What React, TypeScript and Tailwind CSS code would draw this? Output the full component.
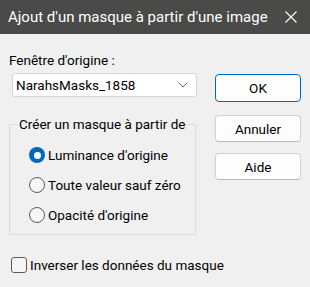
import React from "react";

function Radio({ checked, label }: { checked?: boolean; label: string }) {
  return (
    <div className="flex h-[30px] items-center">
      {checked ? (
        <span className="flex h-[16px] w-[16px] shrink-0 items-center justify-center rounded-full bg-[#0067c0]">
          <span className="h-[7px] w-[7px] rounded-full bg-white" />
        </span>
      ) : (
        <span className="h-[16px] w-[16px] shrink-0 rounded-full border border-[#5c5c5c] bg-[#f6f6f6]" />
      )}
      <span className="ml-[3px]">{label}</span>
    </div>
  );
}

function Button({ label, primary }: { label: string; primary?: boolean }) {
  return (
    <div
      className={
        "flex w-[86px] items-center justify-center rounded-[4px] border bg-[#fdfdfd] " +
        (primary ? "h-[28px] border-[#0067c0]" : "h-[27px] border-[#d0d0d0] border-b-[#b8b8b8]")
      }
    >
      {label}
    </div>
  );
}

export default function App() {
  return (
    <div className="h-[287px] w-[310px] overflow-hidden whitespace-nowrap bg-[#f0f0f0] font-['Roboto',sans-serif] text-[13.5px] leading-[20px] text-black">
      <div className="flex h-[34px] items-center justify-between bg-[#4a4a48] pl-[8px] pr-[13px] text-[15px] text-white">
        <span>Ajout d'un masque à partir d'une image</span>
        <svg width="12" height="12" viewBox="0 0 12 12" stroke="white" strokeWidth="1.1">
          <path d="M0.5 0.5 L11.5 11.5 M11.5 0.5 L0.5 11.5" />
        </svg>
      </div>

      <div className="flex">
        <div className="ml-[9px] w-[187px]">
          <div className="mt-[16px] h-[20px]">Fenêtre d'origine :</div>
          <div className="ml-[3px] mt-[3px] flex h-[24px] w-[185px] items-center justify-between rounded-[3px] border border-[#d5d5d5] bg-white pl-[3px] pr-[8px]">
            <span>NarahsMasks_1858</span>
            <svg width="10" height="6" viewBox="0 0 10 6" fill="none" stroke="#606060" strokeWidth="1">
              <path d="M0.5 0.5 L5 5 L9.5 0.5" />
            </svg>
          </div>

          <fieldset className="mt-[17px] h-[121px] border border-[#dcdcdc] pl-[19px]">
            <legend className="-ml-[11px] px-[1px]">Créer un masque à partir de</legend>
            <div className="mt-[6px]">
              <Radio checked label="Luminance d'origine" />
              <Radio label="Toute valeur sauf zéro" />
              <Radio label="Opacité d'origine" />
            </div>
          </fieldset>

          <div className="ml-[2px] mt-[20px] flex h-[20px] items-center">
            <span className="h-[16px] w-[16px] shrink-0 rounded-[3px] border border-[#5c5c5c] bg-[#f6f6f6]" />
            <span className="ml-[3px]">Inverser les données du masque</span>
          </div>
        </div>

        <div className="ml-[19px] mt-[40px] flex flex-col">
          <Button primary label="OK" />
          <div className="mt-[13px]">
            <Button label="Annuler" />
          </div>
          <div className="mt-[11px]">
            <Button label="Aide" />
          </div>
        </div>
      </div>
    </div>
  );
}
